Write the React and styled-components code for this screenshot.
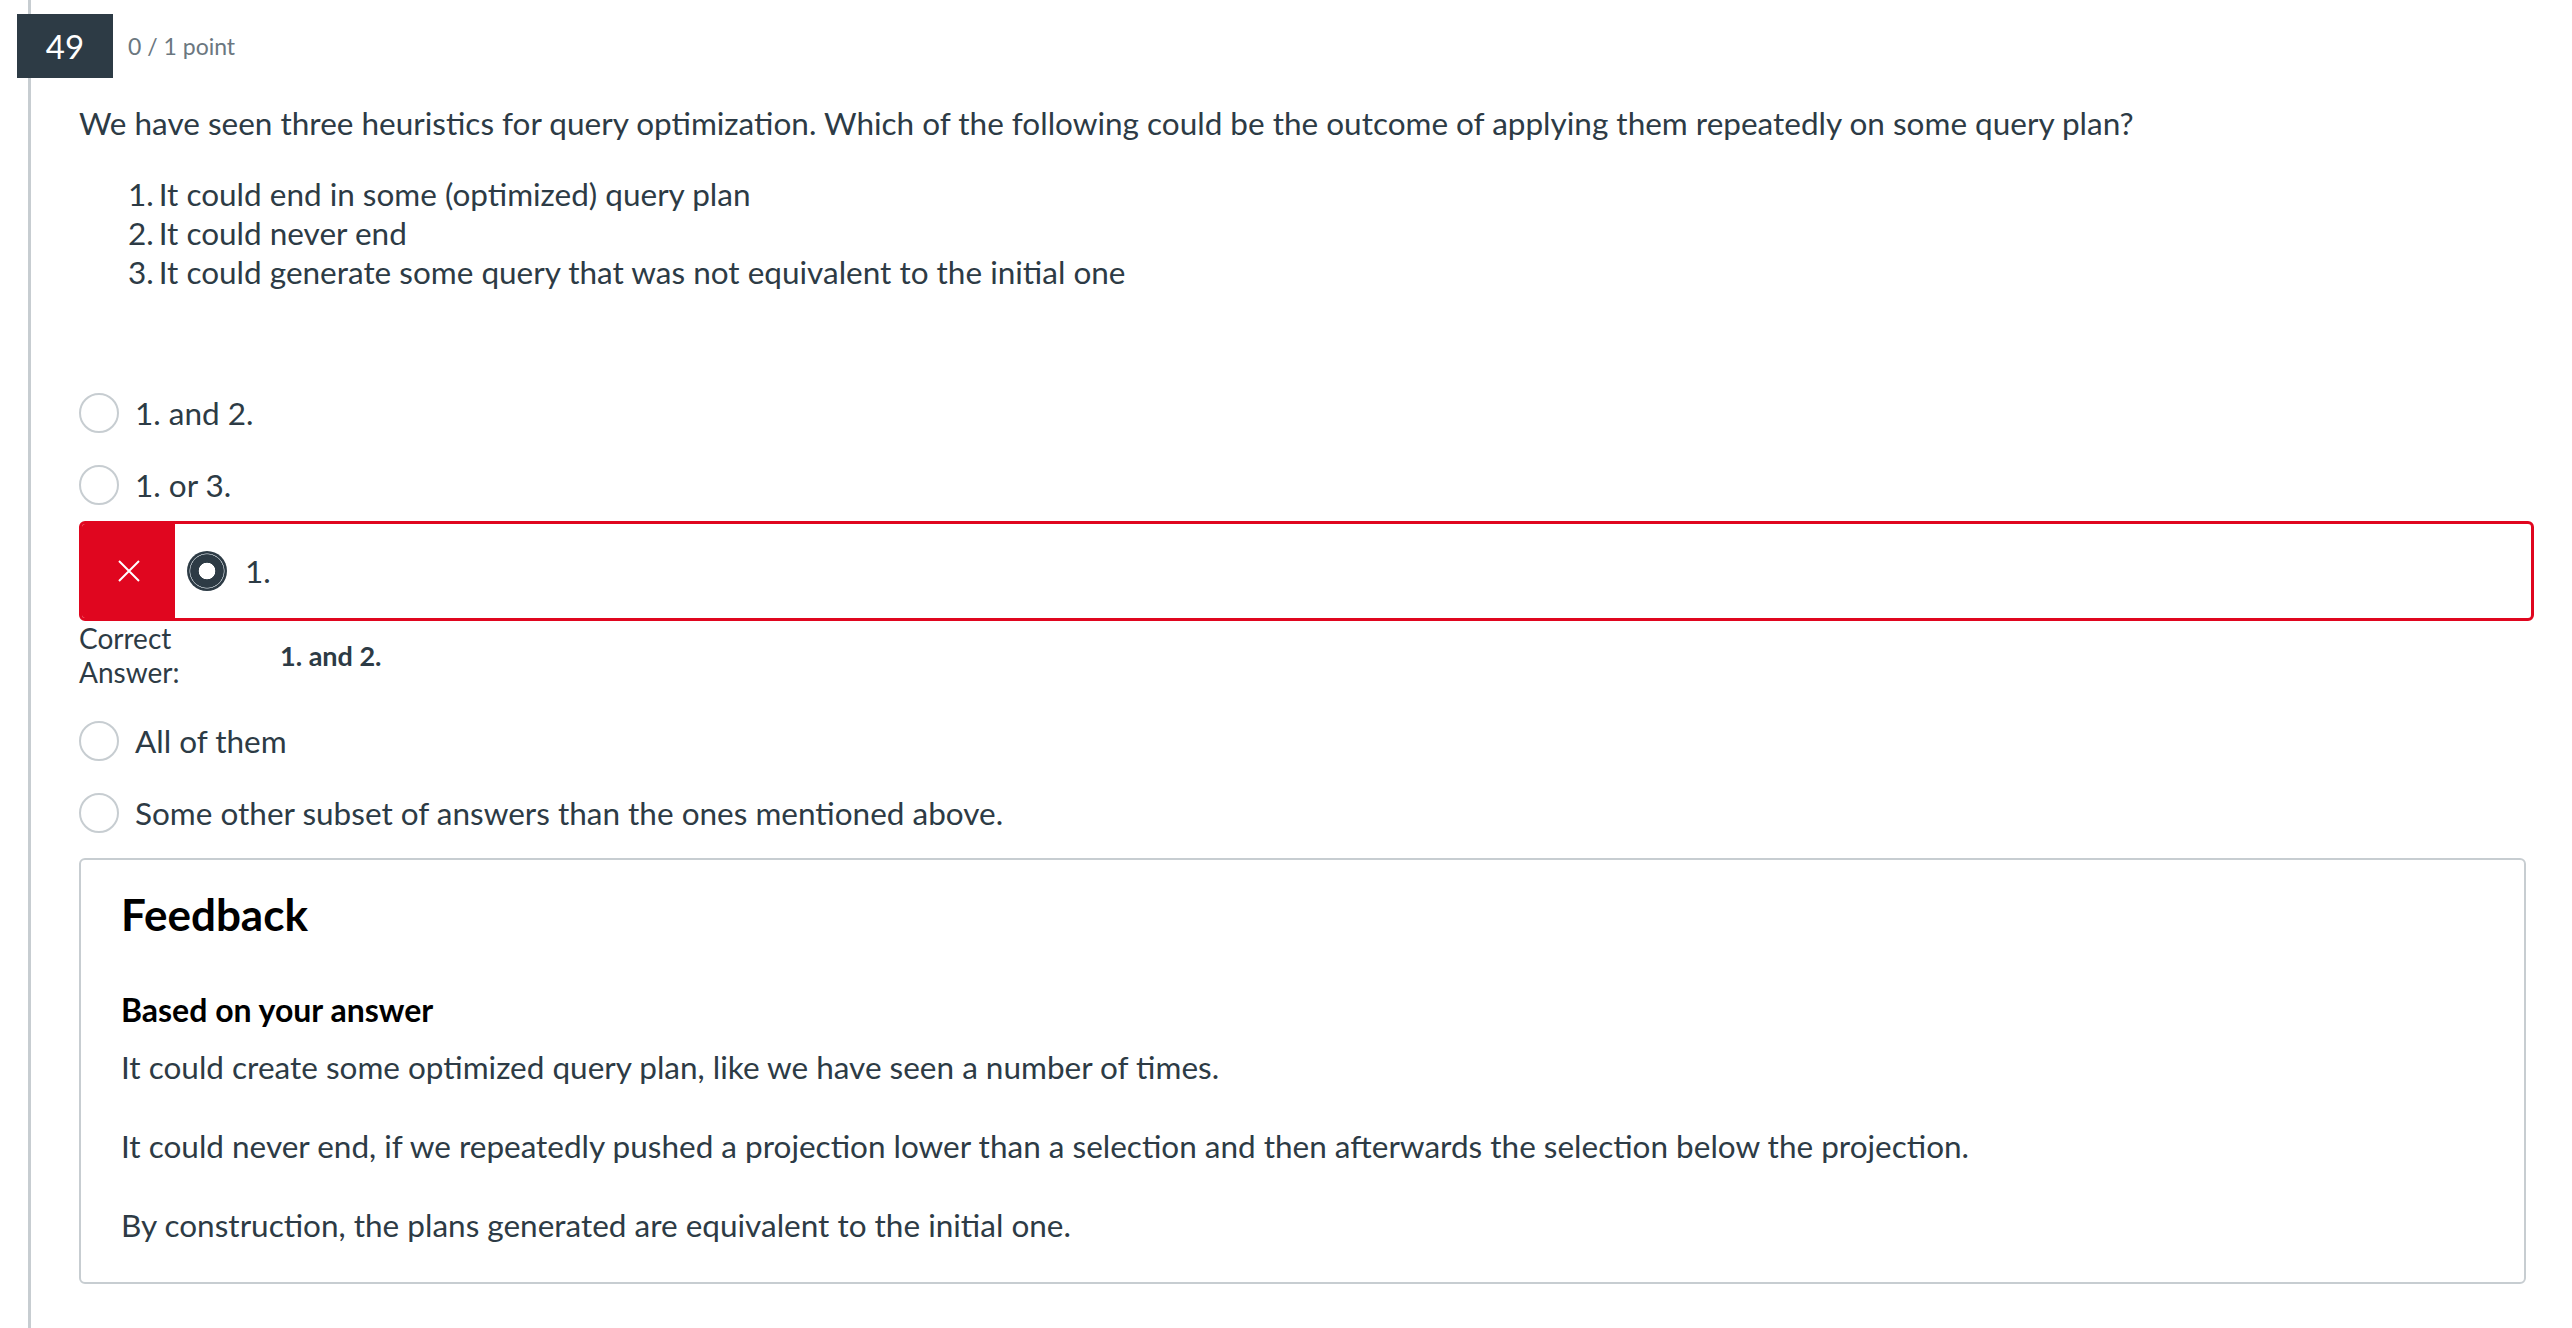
import React from 'react'
import styled, { createGlobalStyle } from 'styled-components'

const GlobalStyle = createGlobalStyle`
  body {
    margin: 0;
    background: #fff;
    font-family: Lato, "Open Sans", sans-serif;
    color: #2d3b45;
  }
`

const Question = styled.div`
  margin-left: 28px;
  border-left: 3px solid #c7cdd1;
  padding: 14px 38px 0 0;
  min-height: 100vh;
  box-sizing: border-box;
`

const Header = styled.div`
  display: flex;
  align-items: center;
  margin-left: -14px;
`

const Badge = styled.div`
  width: 96px;
  height: 64px;
  background: #2d3b45;
  color: #fff;
  font-size: 33px;
  display: flex;
  align-items: center;
  justify-content: center;
`

const Points = styled.span`
  margin-left: 15px;
  font-size: 23px;
  color: #6b7780;
`

const Body = styled.div`
  padding-left: 48px;
  font-size: 31.5px;
  line-height: 39px;
`

const Prompt = styled.p`
  margin: 26px 0 0;
`

const Steps = styled.ol`
  margin: 32px 0 0;
  padding-left: 49px;
  list-style: none;
  counter-reset: step;

  li {
    counter-increment: step;
  }
  li::before {
    content: counter(step) ".";
    margin-right: 5px;
  }
`

const Answers = styled.div`
  margin-top: 85px;
`

const Option = styled.div`
  height: 72px;
  display: flex;
  align-items: center;
`

const Radio = styled.span`
  width: 40px;
  height: 40px;
  box-sizing: border-box;
  border-radius: 50%;
  flex-shrink: 0;
  border: 2px solid #c7cdd1;
  margin-right: 16px;
`

const Chosen = styled.span`
  width: 40px;
  height: 40px;
  border-radius: 50%;
  flex-shrink: 0;
  margin: 0 18px 0 12px;
  background: radial-gradient(circle, #fff 0 8px, #2d3b45 8.6px 16.4px, #9aa4ab 16.8px 17.4px, #2d3b45 17.8px);
`

const WrongBox = styled.div`
  height: 100px;
  box-sizing: border-box;
  border: 3px solid #e0061f;
  border-radius: 6px;
  overflow: hidden;
  display: flex;
  align-items: center;
`

const WrongMark = styled.div`
  width: 93px;
  align-self: stretch;
  background: #e0061f;
  display: flex;
  align-items: center;
  justify-content: center;
`

const CorrectRow = styled.div`
  height: 68px;
  display: flex;
  align-items: center;
  margin-bottom: 16px;
`

const CorrectLabel = styled.div`
  width: 201px;
  font-size: 28px;
  line-height: 34px;
`

const CorrectValue = styled.div`
  font-size: 27px;
  font-weight: 700;
`

const Feedback = styled.div`
  margin: 9px 8px 0 0;
  border: 2px solid #c7cdd1;
  border-radius: 6px;
  padding: 27px 40px 37px;
`

const FeedbackTitle = styled.h2`
  margin: 0;
  font-size: 44px;
  line-height: 55px;
  font-weight: 700;
  color: #000;
`

const Subhead = styled.div`
  margin-top: 48px;
  font-size: 32px;
  font-weight: 700;
  color: #000;
`

const Para = styled.p`
  margin: ${p => (p.first ? '19px' : '40px')} 0 0;
`

const XIcon = () => (
  <svg width="24" height="24" viewBox="0 0 24 24" fill="none" stroke="#fff" strokeWidth="2">
    <path d="M2 2L22 22M22 2L2 22" />
  </svg>
)

const App = () => {
  return (
    <>
      <GlobalStyle />
      <Question>
        <Header>
          <Badge>49</Badge>
          <Points>0 / 1 point</Points>
        </Header>
        <Body>
          <Prompt>
            We have seen three heuristics for query optimization. Which of the following could be the outcome of applying them repeatedly on some query plan?
          </Prompt>
          <Steps>
            <li>It could end in some (optimized) query plan</li>
            <li>It could never end</li>
            <li>It could generate some query that was not equivalent to the initial one</li>
          </Steps>
          <Answers>
            <Option><Radio />1. and 2.</Option>
            <Option><Radio />1. or 3.</Option>
            <WrongBox>
              <WrongMark><XIcon /></WrongMark>
              <Chosen />
              1.
            </WrongBox>
            <CorrectRow>
              <CorrectLabel>Correct<br />Answer:</CorrectLabel>
              <CorrectValue>1. and 2.</CorrectValue>
            </CorrectRow>
            <Option><Radio />All of them</Option>
            <Option><Radio />Some other subset of answers than the ones mentioned above.</Option>
          </Answers>
          <Feedback>
            <FeedbackTitle>Feedback</FeedbackTitle>
            <Subhead>Based on your answer</Subhead>
            <Para first>It could create some optimized query plan, like we have seen a number of times.</Para>
            <Para>It could never end, if we repeatedly pushed a projection lower than a selection and then afterwards the selection below the projection.</Para>
            <Para>By construction, the plans generated are equivalent to the initial one.</Para>
          </Feedback>
        </Body>
      </Question>
    </>
  )
}

export default App
